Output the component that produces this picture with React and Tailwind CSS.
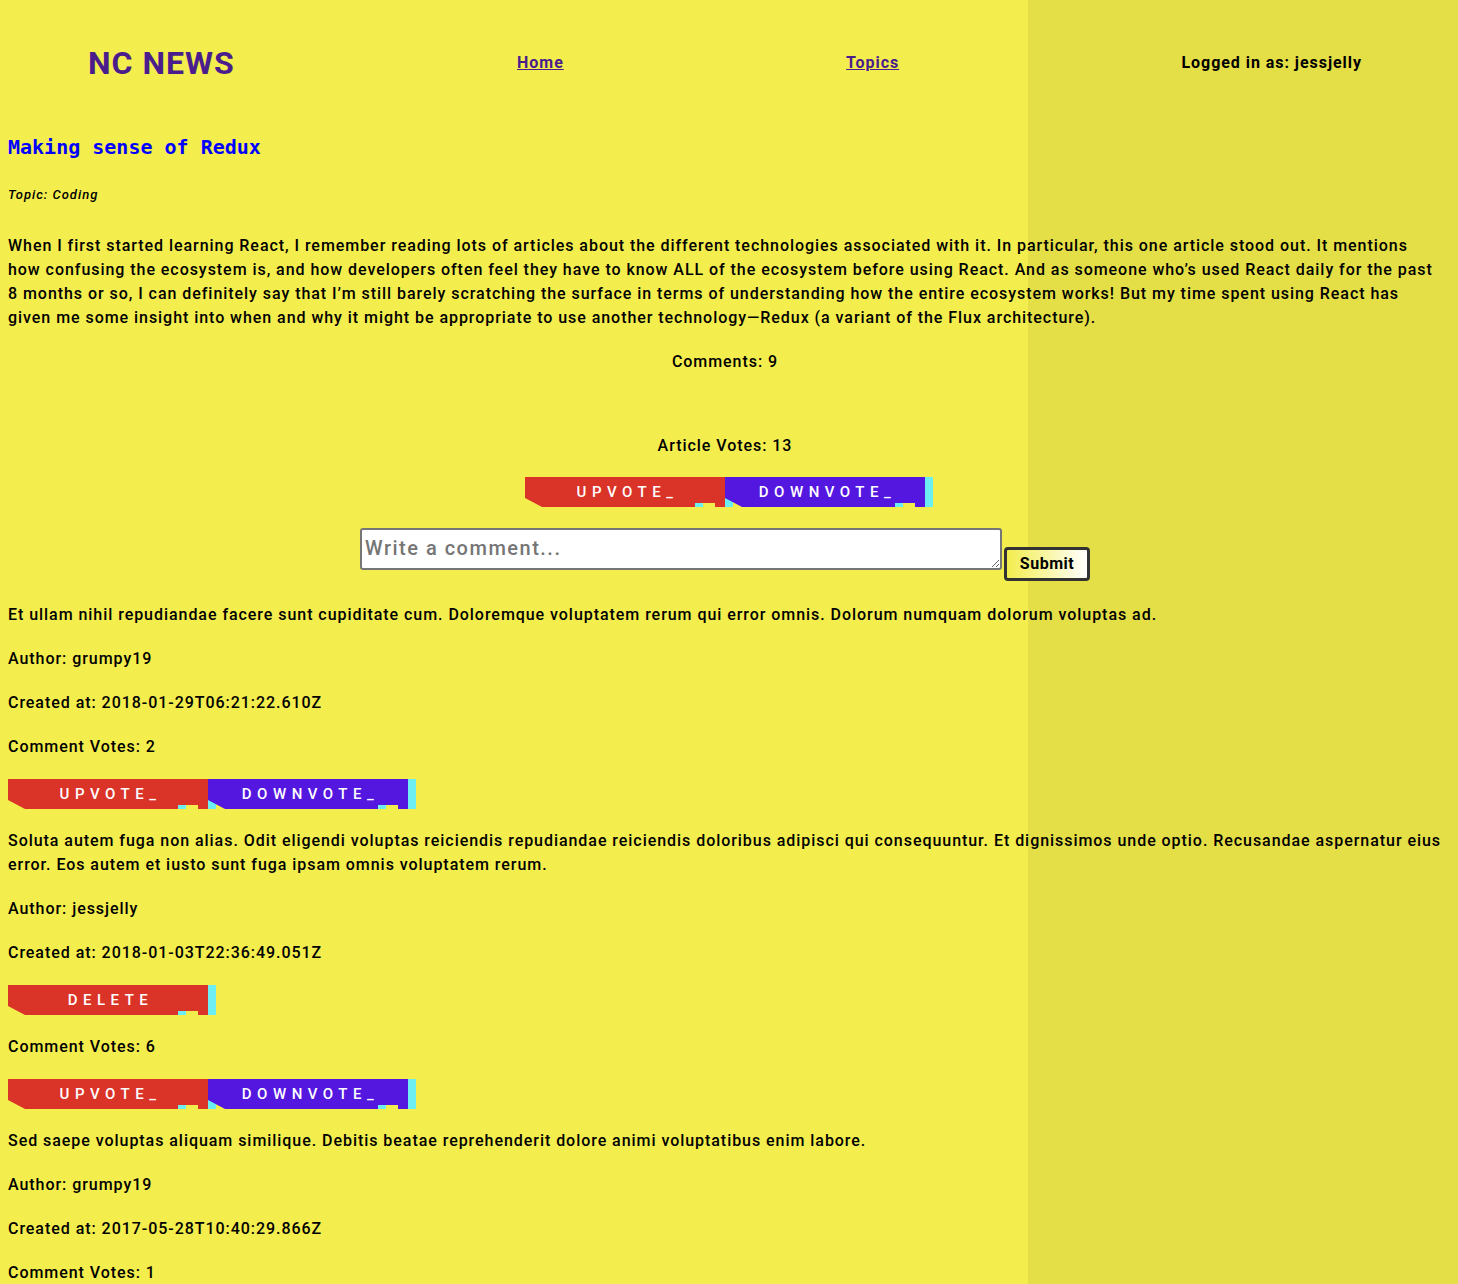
import React from "react";

const body = "When I first started learning React, I remember reading lots of articles about the different technologies associated with it. In particular, this one article stood out. It mentions how confusing the ecosystem is, and how developers often feel they have to know ALL of the ecosystem before using React. And as someone who’s used React daily for the past 8 months or so, I can definitely say that I’m still barely scratching the surface in terms of understanding how the entire ecosystem works! But my time spent using React has given me some insight into when and why it might be appropriate to use another technology—Redux (a variant of the Flux architecture).";

const comments = [
  {
    body: "Et ullam nihil repudiandae facere sunt cupiditate cum. Doloremque voluptatem rerum qui error omnis. Dolorum numquam dolorum voluptas ad.",
    author: "grumpy19",
    created: "2018-01-29T06:21:22.610Z",
    votes: 2,
  },
  {
    body: "Soluta autem fuga non alias. Odit eligendi voluptas reiciendis repudiandae reiciendis doloribus adipisci qui consequuntur. Et dignissimos unde optio. Recusandae aspernatur eius error. Eos autem et iusto sunt fuga ipsam omnis voluptatem rerum.",
    author: "jessjelly",
    created: "2018-01-03T22:36:49.051Z",
    votes: 6,
  },
  {
    body: "Sed saepe voluptas aliquam similique. Debitis beatae reprehenderit dolore animi voluptatibus enim labore.",
    author: "grumpy19",
    created: "2017-05-28T10:40:29.866Z",
    votes: 1,
  },
];

// cyberpunk style button: cyan offset layer, clipped face, little tag bottom right
const CyberButton = ({ label, color }) => (
  <button className="relative w-[200px] h-[30px] shrink-0 cursor-pointer">
    <span className="absolute inset-0 translate-x-[8px] bg-[#6deef2] [clip-path:polygon(0_0,100%_0,100%_100%,8.5%_100%,0_70%)]" />
    <span
      className={`absolute inset-0 [clip-path:polygon(0_0,100%_0,100%_100%,8.5%_100%,0_70%)] ${color}`}
    />
    <span className="relative flex h-full items-center justify-center pl-[5px] text-[15px] font-medium tracking-[5.5px] text-white">
      {label}
    </span>
    <span className="absolute bottom-0 left-[170px] w-[8px] h-[4px] bg-[#6deef2]" />
    <span className="absolute bottom-0 left-[178px] w-[12px] h-[4px] bg-[#f3ed4e]" />
  </button>
);

const VoteButtons = () => (
  <div className="flex">
    <CyberButton label="UPVOTE_" color="bg-[#da3328]" />
    <CyberButton label="DOWNVOTE_" color="bg-[#5417e0]" />
  </div>
);

const Comment = ({ c }) => (
  <div className="flex flex-col gap-5">
    <p>{c.body}</p>
    <p>Author: {c.author}</p>
    <p>Created at: {c.created}</p>
    {c.author === "jessjelly" && (
      <div className="flex">
        <CyberButton label="DELETE" color="bg-[#da3328]" />
      </div>
    )}
    <p>Comment Votes: {c.votes}</p>
    <VoteButtons />
  </div>
);

export default function App() {
  return (
    <div className="min-h-screen bg-[linear-gradient(to_right,#f3ed4e_1028px,#e4de47_1028px)] font-['Roboto',sans-serif] font-medium text-[16px] leading-[24px] tracking-[0.95px] text-black">
      <div className="pl-2 pr-4 pb-10">
        {/* header */}
        <header className="flex h-[126px] items-center justify-between px-20">
          <h1 className="text-[32px] font-bold text-[#4a1c8c] leading-none tracking-[1px]">NC NEWS</h1>
          <a href="#" className="underline font-bold text-[#4a1c8c]">Home</a>
          <a href="#" className="underline font-bold text-[#4a1c8c]">Topics</a>
          <span className="font-bold">Logged in as: jessjelly</span>
        </header>

        <h2 className="mt-[7px] font-['DejaVu_Sans_Mono',monospace] text-[20px] leading-[28px] font-bold tracking-normal text-[#0000ff]">
          Making sense of Redux
        </h2>
        <p className="mt-[24px] text-[13px] leading-[20px] italic tracking-[1px]">Topic: Coding</p>
        <p className="mt-[29px]">{body}</p>

        <div className="mt-5 flex flex-col items-center">
          <p>Comments: 9</p>
          <p className="mt-[60px]">Article Votes: 13</p>
          <div className="mt-[19px]">
            <VoteButtons />
          </div>
          <div className="mt-[21px] flex items-start gap-[2px]">
            <textarea
              placeholder="Write a comment..."
              className="w-[642px] h-[42px] rounded-[3px] border-2 border-[#767676] bg-white px-[3px] pt-[5px] pb-0 text-[20px] leading-[26px] tracking-[1.5px] placeholder:text-[#757575]"
            />
            <button className="mt-[19px] h-[34px] w-[86px] rounded-[4px] border-[3px] border-[#333] bg-[linear-gradient(to_right,#f3ed4e,#ffffff)] font-bold tracking-[0.5px]">
              Submit
            </button>
          </div>
        </div>

        <div className="mt-[22px] flex flex-col gap-5">
          {comments.map((c, i) => (
            <Comment key={i} c={c} />
          ))}
        </div>
      </div>
    </div>
  );
}
